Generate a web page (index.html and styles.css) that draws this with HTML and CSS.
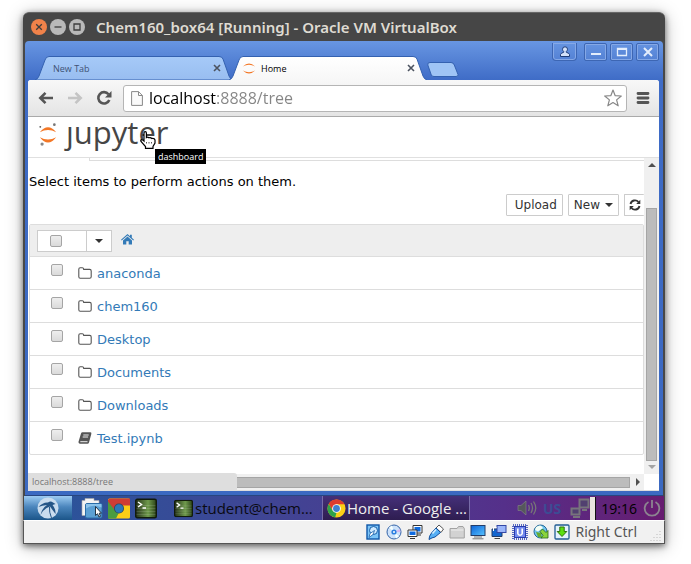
FILE: index.html
```html
<!DOCTYPE html>
<html lang="en">
<head>
<meta charset="utf-8">
<title>Chem160_box64 [Running] - Oracle VM VirtualBox</title>
<link rel="stylesheet" href="styles.css">
</head>
<body>
<svg class="defs" aria-hidden="true">
  <defs>
    <linearGradient id="tab-blue" x1="0" y1="0" x2="0" y2="1"><stop offset="0" stop-color="#a6caf8"/><stop offset="1" stop-color="#98bdf0"/></linearGradient>
    <linearGradient id="tab-white" x1="0" y1="0" x2="0" y2="1"><stop offset="0" stop-color="#fff"/><stop offset="1" stop-color="#f7f7f7"/></linearGradient>
    <linearGradient id="g-blue" x1="0" y1="0" x2="1" y2="1"><stop offset="0" stop-color="#0b62d8"/><stop offset="1" stop-color="#58c4ff"/></linearGradient>
    <linearGradient id="g-term" x1="0" y1="0" x2="1" y2="0"><stop offset="0" stop-color="#243018"/><stop offset=".6" stop-color="#6f9a4c"/><stop offset="1" stop-color="#2b4218"/></linearGradient>
    <symbol id="jup" viewBox="0 0 20 22"><path d="M1 8Q10-1 19 8Q10 3 1 8ZM1 14Q10 23 19 14Q10 19 1 14Z" fill="#f37726"/></symbol>
    <symbol id="folder" viewBox="0 0 14 12"><path d="M.8 2.3Q.8.8 2.2.8H4.3Q5.6.8 5.7 2.4H11.7Q13.2 2.4 13.2 3.9V9.7Q13.2 11.2 11.7 11.2H2.2Q.8 11.2.8 9.7Z" fill="none" stroke="#555" stroke-width="1.1"/></symbol>
    <symbol id="chrome" viewBox="0 0 20 20"><circle cx="10" cy="10" r="9.5" fill="#fbcf16"/><path d="M1.8 5.2A9.5 9.5 0 0 1 18.4 5.5H10L5.8 12Z" fill="#dd3b2d"/><path d="M1.8 5.2 5.9 12.2 10 14.5 8.6 19.4A9.5 9.5 0 0 1 1.8 5.2Z" fill="#2fa24a"/><circle cx="10" cy="10" r="4.6" fill="#fff"/><circle cx="10" cy="10" r="3.6" fill="#3f80cf"/></symbol>
    <symbol id="term" viewBox="0 0 22 20"><rect x=".7" y=".7" width="20.6" height="18.6" rx="1.5" fill="url(#g-term)" stroke="#111b0b" stroke-width="1.4"/><path d="M1.5 7H20.5M1.5 10H20.5M1.5 13H20.5M1.5 16H20.5" stroke="#fff" stroke-opacity=".13"/><path d="M3 3.5 6.5 6 3 8.5M7.5 9.5H11" fill="none" stroke="#fff" stroke-width="1.5"/></symbol>
  </defs>
</svg>

<main class="vm">
  <header class="vm-title">
    <button class="wm close" aria-label="Close"><svg viewBox="0 0 16 16"><path d="M5.2 5.2 10.8 10.8M10.8 5.2 5.2 10.8"/></svg></button>
    <button class="wm" aria-label="Minimize"><svg viewBox="0 0 16 16"><path d="M4.500 8H11.500"/></svg></button>
    <button class="wm" aria-label="Maximize"><svg viewBox="0 0 16 16"><path d="M5 5H11V11H5Z"/></svg></button>
    <h1>Chem160_box64 [Running] - Oracle VM VirtualBox</h1>
  </header>

  <div class="guest">
    <section class="chrome">
      <div class="tabstrip">
        <div class="tab">
          <svg class="tab-bg" viewBox="0 0 198 24" preserveAspectRatio="none"><path d="M0 24Q3 23 4 20L10 4Q11 .5 14 .5H184Q187 .5 188 3L194 20Q195 23 198 24Z" fill="url(#tab-blue)" stroke="#3461b0"/></svg>
          <button class="tab-name">New Tab</button>
          <button class="tab-x" aria-label="Close tab"><svg viewBox="0 0 8 8"><path d="M1 1 7 7M7 1 1 7"/></svg></button>
        </div>
        <div class="tab active">
          <svg class="tab-bg" viewBox="0 0 198 24" preserveAspectRatio="none"><path d="M0 24Q3 23 4 20L10 4Q11 .5 14 .5H184Q187 .5 188 3L194 20Q195 23 198 24Z" fill="url(#tab-white)"/><path d="M0 24Q3 23 4 20L10 4Q11 .5 14 .5H184Q187 .5 188 3L194 20Q195 23 198 24" fill="none" stroke="#3461b0"/></svg>
          <svg class="favicon"><use href="#jup"/></svg>
          <button class="tab-name">Home</button>
          <button class="tab-x" aria-label="Close tab"><svg viewBox="0 0 8 8"><path d="M1 1 7 7M7 1 1 7"/></svg></button>
        </div>
        <button class="newtab" aria-label="New tab"><svg viewBox="0 0 32 16"><path d="M.8 3Q.2.5 3 .5H24Q26.500.5 27.300 3L31 12.500Q31.500 14.500 29 14.500H7Q5 14.500 4.300 13Z" fill="#9fc4f5" stroke="#3461b0"/></svg></button>
        <div class="controls">
          <button class="ctl user" aria-label="Profile"><svg viewBox="0 0 12 12"><path d="M1.500 10.500V8.500Q2 7 4.700 6.300V5.500Q3.500 4.500 3.500 3.300A2.500 2.500 0 0 1 8.500 3.300Q8.500 4.500 7.300 5.500V6.300Q10 7 10.500 8.500V10.500Z" fill="#d4e2fa" stroke="#1e3c78"/></svg></button>
          <button class="ctl" aria-label="Minimize window"><svg viewBox="0 0 12 12"><path d="M1 8H11" stroke="#e3edfc" stroke-width="2"/></svg></button>
          <button class="ctl" aria-label="Maximize window"><svg viewBox="0 0 12 12"><path d="M1.500 2.500H10.500V9.500H1.500Z" fill="none" stroke="#e3edfc" stroke-width="1.300"/><path d="M1 3H11" stroke="#e3edfc" stroke-width="2"/></svg></button>
          <button class="ctl" aria-label="Close window"><svg viewBox="0 0 12 12"><path d="M2 2 10 10M10 2 2 10" stroke="#e3edfc" stroke-width="2"/></svg></button>
        </div>
      </div>

      <div class="client">
        <nav class="toolbar">
          <button aria-label="Back"><svg viewBox="0 0 16 16"><path d="M15 8H3M7.500 2.800 2.300 8 7.500 13.200" fill="none" stroke="#555" stroke-width="2.600"/></svg></button>
          <button aria-label="Forward"><svg viewBox="0 0 16 16"><path d="M1 8H13M8.500 2.800 13.700 8 8.500 13.200" fill="none" stroke="#c4c4c4" stroke-width="2.600"/></svg></button>
          <button aria-label="Reload"><svg viewBox="0 0 16 16"><path d="M13.300 10A5.700 5.700 0 1 1 12.500 4.300" fill="none" stroke="#555" stroke-width="2.600"/><path d="M15.500 1V7.500H9Z" fill="#555"/></svg></button>
          <div class="omnibox">
            <svg class="page-icon" viewBox="0 0 12 15"><path d="M.6.6H7.500L11.400 4.500V14.400H.6ZM7.500.6V4.500H11.400" fill="#fafafa" stroke="#888"/></svg>
            <input type="text" aria-label="Address" value="localhost:8888/tree">
            <button aria-label="Bookmark"><svg viewBox="0 0 18 18"><path d="M9 1 11.200 6.700 17.300 7 12.600 10.900 14.200 16.800 9 13.500 3.800 16.800 5.400 10.900.7 7 6.800 6.700Z" fill="#fff" stroke="#888" stroke-width="1.200" stroke-linejoin="round"/></svg></button>
          </div>
          <button class="menu" aria-label="Menu"><svg viewBox="0 0 14 14"><path d="M2 2.500H12M2 7H12M2 11.500H12" stroke="#555" stroke-width="2.800" stroke-linecap="round"/></svg></button>
        </nav>

        <div class="jheader">
          <a class="logo" href="#" aria-label="jupyter dashboard">
            <svg viewBox="0 0 22 26"><path d="M2 10Q11-1 20 10Q11 5 2 10ZM2 15.500Q11 27 20 15.500Q11 20.500 2 15.500Z" fill="#f37726"/><circle cx="18" cy="1.700" r="1.500" fill="#777"/><circle cx="2.500" cy="4" r="1" fill="#555"/><circle cx="4.500" cy="23" r="1.800" fill="#888"/></svg>
            <span class="word"><span class="j">j</span>upyter</span>
          </a>
          <svg class="cursor" viewBox="0 0 16 18"><path d="M4 10V2Q4 .7 5.200.7 6.400.7 6.400 2V6.500Q7.500 5.500 9 6.800 10.500 6 11.800 7.500 14.500 7 15 9V12L13 15.500V17.300H5.500V15.500L1 10.500Q.3 9 1.500 8.600 2.500 8.500 4 10Z" fill="#fff" stroke="#000" stroke-width="1.200"/><path d="M6.500 11V12.500M9 11V12.500M11.500 11V12.500" stroke="#555"/></svg>
          <span class="tooltip" role="tooltip">dashboard</span>
        </div>

        <div class="viewport">
          <div class="content">
            <div class="tabline"></div>
            <p>Select items to perform actions on them.</p>
            <div class="actions">
              <button class="btn upload">Upload</button>
              <button class="btn new">New <i class="caret"></i></button>
              <button class="btn refresh" aria-label="Refresh"><svg viewBox="0 0 12 12"><path d="M1.500 5A4.600 4.600 0 0 1 9.500 3M10.500 7A4.600 4.600 0 0 1 2.500 9" fill="none" stroke="#333" stroke-width="1.900"/><path d="M11.300.8V5H7.200ZM.7 11.200V7H4.800Z" fill="#333"/></svg></button>
            </div>
            <div class="files">
              <div class="files-head">
                <div class="group">
                  <label class="all"><input type="checkbox" aria-label="Select all"></label>
                  <button class="drop" aria-label="Select menu"><i class="caret"></i></button>
                </div>
                <a class="home" href="#" aria-label="Home folder"><svg viewBox="0 0 13 11"><path d="M6.500 0 9 2.200V.8H10.800V3.800L13 5.800 12.300 6.600 6.500 1.600.7 6.600 0 5.800Z" fill="#337ab7"/><path d="M6.500 2.500 11 6.400V10.500H7.700V7.200H5.300V10.500H2V6.400Z" fill="#337ab7"/></svg></a>
              </div>
              <ul>
                <li><input type="checkbox" aria-label="anaconda"><svg class="fi"><use href="#folder"/></svg><a href="#">anaconda</a></li>
                <li><input type="checkbox" aria-label="chem160"><svg class="fi"><use href="#folder"/></svg><a href="#">chem160</a></li>
                <li><input type="checkbox" aria-label="Desktop"><svg class="fi"><use href="#folder"/></svg><a href="#">Desktop</a></li>
                <li><input type="checkbox" aria-label="Documents"><svg class="fi"><use href="#folder"/></svg><a href="#">Documents</a></li>
                <li><input type="checkbox" aria-label="Downloads"><svg class="fi"><use href="#folder"/></svg><a href="#">Downloads</a></li>
                <li><input type="checkbox" aria-label="Test.ipynb"><svg class="fi" viewBox="0 0 14 12"><path d="M4.500.3H12.500Q13.800.5 13.300 2L11 10.500Q10.600 11.700 9.500 11.700H1.800Q.2 11.500.5 9.800L3 1.500Q3.400.3 4.500.3Z" fill="#555"/><path d="M5.300 3H10.700M4.700 5H10.100M2.300 9.700H9.500" stroke="#fff" stroke-width=".9"/></svg><a href="#">Test.ipynb</a></li>
              </ul>
            </div>
          </div>
          <div class="vbar"><i class="up"></i><span></span><i class="down"></i></div>
          <div class="hbar"><span></span><i class="right"></i></div>
          <div class="corner"></div>
          <div class="status-bubble">localhost:8888/tree</div>
        </div>
      </div>
    </section>

    <footer class="taskbar">
      <button class="start" aria-label="Start"><svg viewBox="0 0 22 22"><circle cx="11" cy="11" r="10.500" fill="#c9dcee"/><path d="M1.500 10Q6 5 11 5.500 13.500 3.500 16 5.500L18.500 7 15.500 8Q19 12 18.500 17L13 9.500Q6 12 3.500 18 5 11 10 8 5 8.500 1.500 10Z" fill="#255687"/><path d="M12.500 10Q12 15 14.500 21" stroke="#255687" fill="none"/></svg></button>
      <div class="launch">
        <button aria-label="Files"><svg viewBox="0 0 22 20"><path d="M1 2H4V0H13V2H18V17H1Z" fill="#f3f3f3" stroke="#aaa" stroke-width=".6"/><rect x="4.500" y="5" width="16.500" height="14.500" rx="1.500" fill="#5ca0d4" stroke="#2a6da8"/><path d="M5 10Q12 5 20.500 9V5.500H5Z" fill="#8cc3ea"/><path d="M14.500 8V17L16.500 15.200 18 18.500 19.500 17.800 18.200 14.700H20.500Z" fill="#fff" stroke="#234"/></svg></button>
        <button aria-label="Chrome"><svg viewBox="0 0 22 20"><rect width="22" height="20" rx="1.500" fill="#fbcf16"/><path d="M0 1.500 1.500 0H22V7H11L6 13 0 6Z" fill="#cf3d34"/><path d="M0 3 7 12 11 14 8 20H0Z" fill="#4a9c40"/><circle cx="11" cy="10" r="5" fill="#304a60"/><circle cx="11" cy="10" r="4.200" fill="#2d79b8"/></svg></button>
        <button aria-label="Terminal"><svg><use href="#term"/></svg></button>
      </div>
      <button class="task"><svg viewBox="0 0 22 20"><use href="#term"/></svg>student@chem…</button>
      <button class="task current"><svg><use href="#chrome"/></svg>Home - Google …</button>
      <div class="tray">
        <svg class="vol" viewBox="0 0 20 16"><path d="M1 5.500H4L9 1V15L4 10.500H1Z" fill="#55575c" stroke="#888" stroke-width=".6"/><path d="M11.500 5Q13 8 11.500 11M14 3Q17 8 14 13M16.500 1.500Q21 8 16.500 14.500" fill="none" stroke="#777" stroke-width="1.300"/></svg>
        <b>US</b>
        <svg class="net" viewBox="0 0 20 20"><path d="M9.500 1.500H18.500V9.500H9.500ZM12 12H17M1.500 10.500H9.500V16.500H1.500ZM3 19H10" fill="#514070" stroke="#77747c" stroke-width="2"/></svg>
        <i class="meter"></i>
        <time>19:16</time>
        <svg class="power" viewBox="0 0 18 18"><path d="M5.500 3A7.300 7.300 0 1 0 12.500 3M9 1V9" fill="none" stroke="#8c8490" stroke-width="1.800"/></svg>
      </div>
    </footer>
  </div>

  <footer class="vm-status">
    <svg viewBox="0 0 16 16"><rect x="2" y="1" width="12" height="14" fill="#7cc5f8" stroke="#0d56a8" stroke-width="1.400"/><circle cx="8.500" cy="6.500" r="4" fill="#cfeaff" stroke="#145da8"/><path d="M4 13.500 5 9.500 9.500 6.500 8 10.500Z" fill="#fff" stroke="#145da8" stroke-width=".8"/></svg>
    <svg viewBox="0 0 16 16"><circle cx="8" cy="8" r="7" fill="#cde2fa" stroke="#3564a8"/><path d="M8 8 3 3.500 6 1.500ZM8 8 13 12.500 10 14.500Z" fill="#f5ffff"/><path d="M8 8 14 5 14.500 8Z" fill="#d5b8f0"/><circle cx="8" cy="8" r="2.600" fill="#2c7fe0"/><circle cx="8" cy="8" r="1" fill="#fff"/></svg>
    <svg viewBox="0 0 16 16"><path d="M6 1.500H15V9H6Z" fill="#fff" stroke="#333"/><path d="M9 11H14" stroke="#333"/><rect x="7.500" y="3" width="6" height="4.500" fill="#0d6ae0"/><path d="M1 6H10V12.500H1Z" fill="#fff" stroke="#333"/><path d="M3 14.500H8" stroke="#333"/><rect x="2.500" y="7.500" width="6" height="3.500" fill="#0d6ae0"/></svg>
    <svg viewBox="0 0 16 16"><path d="M11 1 15.500 5 13 8.500 8 4Z" fill="#fff" stroke="#555"/><path d="M8 4 12.500 8.500 7 13Q4 13.500 1 15.500 1 12 3.500 9Z" fill="#55aff5" stroke="#124f9d"/><path d="M8 5.500 4.500 9.500" stroke="#d9f0ff" stroke-width="1.500"/></svg>
    <svg viewBox="0 0 16 16"><path d="M1 4.500H8L9.500 2.500H14L15.300 4.500V14H1Z" fill="#d2d2d2" stroke="#a2a2a2"/><path d="M2 6H14.500" stroke="#eee"/></svg>
    <svg viewBox="0 0 16 16"><rect x="1" y="1.500" width="14" height="10" fill="url(#g-blue)" stroke="#223c68"/><path d="M4 13H12M2.500 14.800H13.500" stroke="#777"/></svg>
    <svg viewBox="0 0 16 16"><path d="M1 5H11V12.500H1Z" fill="#1266cf" stroke="#223c68"/><path d="M3.500 14.500H9" stroke="#444"/><rect x="6" y="1.500" width="9" height="7" fill="#9bb6fa" stroke="#3347a4"/><path d="M2.500 7V3.500H5.500" fill="none" stroke="#fff"/></svg>
    <svg viewBox="0 0 16 16"><rect x="1" y="1" width="14" height="14" fill="none" stroke="#273cae" stroke-width="1.500" stroke-dasharray="1 1"/><rect x="2.500" y="2.500" width="11" height="11" fill="#7188ec" stroke="#273cae"/><path d="M5.800 4.500V9.500Q6 11.200 8 11.200T10.200 9.500V4.500" fill="none" stroke="#fff" stroke-width="1.600"/></svg>
    <svg viewBox="0 0 16 16"><circle cx="7.500" cy="7.500" r="6.500" fill="#70c4ee" stroke="#246898"/><path d="M3 3Q8-.5 10 4L5 7.500 2 6Z" fill="#f5fff5"/><path d="M3 8 8 9 9 14 5 13Z" fill="#66ad2e"/><path d="M7 7.500 9.500 5 13 8.500 15 6.500V14H8L10 11.500Z" fill="#8bd43c" stroke="#276414" stroke-width=".8"/></svg>
    <svg viewBox="0 0 16 16"><rect x="1" y="1" width="14" height="14" rx="1" fill="#e5f3fc" stroke="#235e94" stroke-width="1.300"/><path d="M5.800 3H10.200V7.500H12.800L8 12.500 3.200 7.500H5.800Z" fill="#5be011" stroke="#2d720c"/></svg>
    <span>Right Ctrl</span>
    <svg class="grip" viewBox="0 0 12 12"><path d="M10 1V2M10 4V5M7 4V5M10 7V8M7 7V8M4 7V8M10 10V11M7 10V11M4 10V11M1 10V11" stroke="#bbb"/></svg>
  </footer>
</main>
</body>
</html>
```
FILE: styles.css
```css
* { box-sizing: border-box; }
body {
  margin: 0;
  min-height: 100vh;
  display: flex;
  padding: 12px 26px 20px 23px;
  background: #fff;
  font-family: "Open Sans", sans-serif;
}
.defs { position: absolute; width: 0; height: 0; }
button { margin: 0; padding: 0; border: 0; background: none; font: inherit; color: inherit; }
a { color: #337ab7; text-decoration: none; }
svg { display: block; flex: none; }

.vm {
  flex: 1;
  min-width: 0;
  display: flex;
  flex-direction: column;
  border-radius: 6px 6px 0 0;
  box-shadow: 0 2px 6px rgba(0,0,0,.55), 0 3px 18px rgba(0,0,0,.28);
}
.vm-title {
  height: 29px;
  display: flex;
  align-items: center;
  gap: 3px;
  padding-left: 8px;
  background: #464646;
  border-top: 1px solid #666;
  border-radius: 6px 6px 0 0;
}
.vm-title h1 { margin: 0 0 0 8px; font-family: "Noto Sans", sans-serif; font-size: 15px; line-height: 20px; font-weight: 600; color: #dfdbd2; white-space: nowrap; }
.wm { width: 16px; height: 16px; border-radius: 50%; background: #b9b9b9; }
.wm.close { background: #f0824a; }
.wm path { fill: none; stroke: #3d3d3d; stroke-width: 1.3; }

.guest {
  flex: 1;
  display: flex;
  flex-direction: column;
  border: solid #484848;
  border-width: 0 1px;
  background: #484848;
}
.chrome {
  flex: 1;
  display: flex;
  flex-direction: column;
  margin: 0 1px 0 1px;
  padding: 0 4px 4px 3px;
  background: linear-gradient(#6896e2, #3e6bc6 40px, #3b69c1);
  border-radius: 4px 4px 0 0;
  border-bottom: 1px solid #28467f;
}
.tabstrip { height: 39px; display: flex; align-items: flex-end; padding-left: 7px; }
.tab {
  position: relative;
  flex: 0 1 198px;
  height: 24px;
  display: flex;
  align-items: center;
  padding: 0 12px 0 18px;
  font-size: 9px;
  color: #405274;
}
.tab.active { margin-left: -4px; padding-left: 13px; color: #000; }
.tab-bg { position: absolute; inset: 0; width: 100%; height: 100%; }
.tab-name, .tab-x, .favicon { position: relative; }
.tab-name { flex: 1; text-align: left; }
.tab-x { width: 8px; height: 8px; }
.tab-x path { stroke: #4c5360; stroke-width: 1.6; }
.favicon { width: 14px; height: 15px; margin-right: 5px; }
.newtab { width: 32px; height: 20px; }
.newtab svg { width: 32px; height: 16px; }
.controls { margin-left: auto; align-self: flex-start; display: flex; gap: 3px; padding-top: 2px; }
.ctl {
  width: 23px;
  height: 18px;
  display: grid;
  place-items: center;
  border: 1px solid #3d66b3;
  box-shadow: inset 0 0 0 1px #85a8e6;
  border-radius: 2px;
}
.ctl svg { width: 12px; height: 12px; }
.ctl.user { width: 25px; margin-right: 4px; border-top: 0; border-radius: 0 0 4px 4px; }

.client { flex: 1; display: flex; flex-direction: column; background: #fff; border-radius: 3px 3px 0 0; }
.toolbar {
  height: 37px;
  display: flex;
  align-items: center;
  gap: 13px;
  padding: 0 9px 0 10px;
  background: linear-gradient(#f8f8f8, #e4e4e4);
  border-bottom: 1px solid #aaa;
  border-radius: 3px 3px 0 0;
}
.toolbar svg { width: 16px; height: 16px; }
.omnibox {
  flex: 1;
  height: 27px;
  display: flex;
  align-items: center;
  gap: 6px;
  margin: 0 -4px 0 -2px;
  padding: 0 4px 0 7px;
  border: 1px solid #b5b5b5;
  border-radius: 3px;
  background: #fff;
}
.omnibox .page-icon { width: 12px; height: 15px; }
.omnibox input {
  flex: 1;
  min-width: 0;
  height: 24px;
  padding: 0;
  border: 0;
  font: 16px "Open Sans", sans-serif;
  color: transparent;
  background: linear-gradient(90deg, #000 67px, #858585 67px);
  background-clip: text;
  -webkit-background-clip: text;
}
.omnibox button svg { width: 18px; height: 18px; }
.toolbar .menu svg { width: 14px; height: 14px; }

.jheader { position: relative; height: 41px; border-bottom: 1px solid #e0e0e0; }
.logo { display: flex; align-items: flex-start; gap: 8px; padding: 6px 0 0 10px; color: #464646; }
.logo svg { width: 20px; height: 24px; }
.word { font-size: 31px; line-height: 32px; margin-top: -7px; }
.j { display: inline-block; clip-path: inset(11px 0 -10px -8px); }
.cursor { position: absolute; left: 112px; top: 14px; width: 16px; height: 18px; z-index: 3; }
.tooltip {
  position: absolute;
  left: 127px;
  top: 32px;
  z-index: 3;
  padding: 0 3px;
  font-size: 9px;
  line-height: 15px;
  color: #fff;
  background: #000;
}

.viewport {
  position: relative;
  flex: 1;
  display: grid;
  grid-template-columns: minmax(0, 1fr) 15px;
  grid-template-rows: 1fr 16px;
  border-bottom: 1px solid #ddd;
  font-family: "DejaVu Sans", sans-serif;
  font-size: 13px;
  color: #000;
}
.content { overflow: hidden; padding-left: 1px; }
.tabline { height: 3px; margin-left: 60px; border: solid #ddd; border-width: 0 0 1px 1px; }
.content p { margin: 13px 0 4px; line-height: 16px; }
.actions { display: flex; justify-content: flex-end; gap: 5px; }
.btn {
  height: 22px;
  display: flex;
  align-items: center;
  border: 1px solid #ccc;
  border-radius: 1px;
  background: #fff;
  color: #333;
  font-size: 12px;
}
.upload { padding: 0 5px 0 8px; }
.new { padding: 0 5px; gap: 5px; }
.refresh { padding: 0 3px 0 4px; border-right: 0; }
.refresh svg { width: 12px; height: 12px; }
.caret { border: 4px solid transparent; border-top-color: #333; border-bottom: 0; }
.files { margin-top: 8px; border: 1px solid #ddd; border-radius: 2px; }
.files-head { height: 31px; display: flex; align-items: center; padding-left: 7px; gap: 9px; background: #eee; }
.group { height: 22px; display: flex; border: 1px solid #ccc; background: #fff; }
.all { width: 48px; display: flex; align-items: center; padding-left: 12px; }
.drop { width: 25px; display: grid; place-items: center; border-left: 1px solid #ccc; }
.home svg { width: 13px; height: 11px; margin-top: -3px; }
input[type=checkbox] {
  appearance: none;
  width: 12px;
  height: 12px;
  margin: 0;
  border: 1px solid #a5a5a5;
  border-radius: 2px;
  background: linear-gradient(#eee, #dadada);
}
.files ul { margin: 0; padding: 0; list-style: none; }
.files li { height: 33px; display: flex; align-items: center; padding-left: 21px; border-top: 1px solid #ddd; }
.files li input { margin-bottom: 6px; }
.fi { width: 14px; height: 12px; margin: 0 5px 0 15px; }

.vbar, .hbar { display: flex; align-items: center; background: #f0f0f0; }
.vbar { flex-direction: column; }
.vbar span { flex: 1; width: 11px; margin: 41px 0 4px; background: #bcbcbc; border: 1px solid #a5a5a5; }
.up, .down, .right { border: 4px solid transparent; }
.up { margin-top: 1px; border-bottom-color: #505050; }
.down { margin-bottom: 1px; border-top-color: #a3a3a3; }
.hbar span { flex: 1; height: 11px; margin-right: 6px; background: #bcbcbc; border: 1px solid #a5a5a5; }
.right { border-left-color: #505050; }
.status-bubble {
  position: absolute;
  left: 0;
  bottom: -1px;
  width: 209px;
  height: 18px;
  padding-left: 4px;
  border-radius: 0 3px 0 0;
  background: #dedede;
  font: 9px/17px "Open Sans", sans-serif;
  color: #777;
}

.taskbar { height: 24px; display: flex; background: linear-gradient(90deg, #28569b, #4a3d91 55%, #55308a 75%, #671c70); }
.start { width: 48px; display: grid; place-items: center; background: linear-gradient(#9dcbf2, #4b86bd 45%, #1b5589); }
.start svg { width: 22px; height: 22px; }
.launch { display: flex; align-items: center; gap: 5px; padding: 0 14px 0 9px; }
.launch svg { width: 22px; height: 21px; }
.task {
  flex: 0 1 151px;
  display: flex;
  align-items: center;
  gap: 2px;
  padding-left: 3px;
  font-size: 15px;
  white-space: nowrap;
  color: #0a0a12;
}
.task svg { width: 19px; height: 19px; }
.task.current { flex-basis: 148px; padding-left: 4px; gap: 1px; color: #eee; background: linear-gradient(#453079, #2e1d50); border: solid #786da8; border-width: 0 1px; }
.tray { margin-left: auto; display: flex; align-items: center; padding-right: 3px; font-size: 14px; color: #000; }
.tray b { color: #3c4c94; margin: 0 9px 0 6px; }
.vol { width: 20px; height: 16px; }
.net { width: 20px; height: 20px; }
.meter { width: 6px; height: 23px; background: #e8e4de; border-right: 1px solid #111; }
.tray time { margin: 0 6px 0 5px; }
.power { width: 18px; height: 18px; }

.vm-status {
  height: 24px;
  display: flex;
  align-items: center;
  justify-content: flex-end;
  gap: 5px;
  padding: 0 2px 0 0;
  background: #f1f1f1;
  border: 1px solid #555;
  border-top-color: #fff;
}
.vm-status svg { width: 16px; height: 16px; }
.vm-status span { font-family: "Noto Sans", sans-serif; font-size: 14px; line-height: 20px; color: #555; }
.vm-status .grip { width: 12px; height: 12px; margin: 8px 0 0 8px; }
```
